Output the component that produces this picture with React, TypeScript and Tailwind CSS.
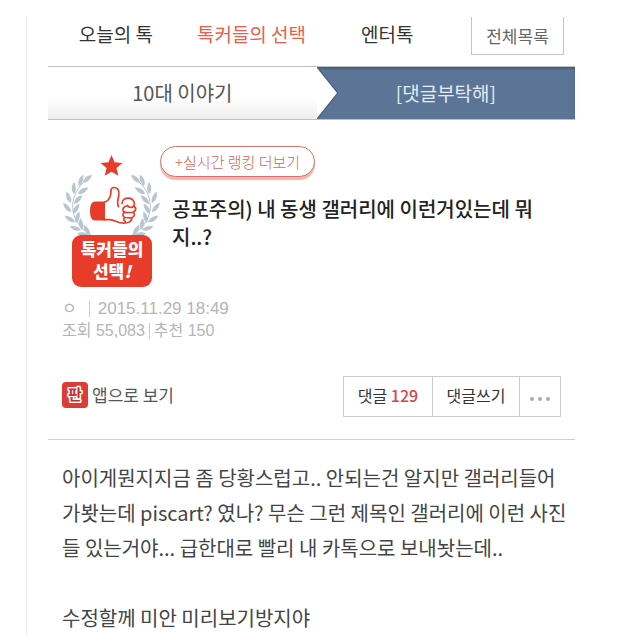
const tabs = [
  { name: "오늘의 톡", active: false },
  { name: "톡커들의 선택", active: true },
  { name: "엔터톡", active: false },
];

// [x, y, angle] of the base of every leaf on the left branch
const leaves = [
  [21, 37, -42],
  [17, 40, -70],
  [16, 48, -32],
  [12, 48, -90],
  [12, 58, -46],
  [9, 57, -112],
  [11, 68, -58],
  [9, 66, -130],
  [14, 77, -74],
  [13, 76, -148],
  [20, 84, -98],
  [19, 84, -162],
  [28, 89, -122],
  [27, 89, -172],
];

function Branch() {
  return (
    <g fill="#b9c5d0">
      <path
        d="M22 36C13 44 8 57 12 69c3 9 9 15 17 20"
        fill="none"
        stroke="#b9c5d0"
        strokeWidth="1"
      />
      {leaves.map(([x, y, angle]) => (
        <path
          key={`${x}-${y}-${angle}`}
          d="M0 0C3-3 8-3 12 0C8 2.500 3 2.500 0 0Z"
          transform={`translate(${x} ${y}) rotate(${angle})`}
        />
      ))}
    </g>
  );
}

function Badge() {
  return (
    <svg
      viewBox="0 0 98 142"
      className="w-[98px] h-[142px] shrink-0"
      role="img"
      aria-label="톡커들의 선택!"
    >
      <path
        d="M49.5 9l3 7.3 8 .6-6 5.2 1.8 7.7-6.8-4.1-6.8 4.1 1.9-7.7-6.1-5.2 8-.6z"
        fill="#e83c2b"
      />
      <Branch />
      <g transform="translate(99 0) scale(-1 1)">
        <Branch />
      </g>

      {/* thumbs up */}
      <path
        d="M43 55.500H33c-3.500 0-5 4-5 9.500s1.500 9.500 5 9.500h10z"
        fill="#e83c2b"
      />
      <g
        fill="none"
        stroke="#e83c2b"
        strokeWidth="1.700"
        strokeLinecap="round"
        strokeLinejoin="round"
      >
        <path d="M42 56.500C46 55 48.500 51.500 48.800 47.500C49 44 48.800 41.500 52 41.500C56.500 41.500 57.500 46 56.800 49.500C56 53.500 54.500 56.500 56.500 60.500" />
        <path d="M60 57.500C60 53.500 64 51.500 67.500 52.200C72 53 73.500 57.500 71.500 60.300C70 62.300 66.500 61.500 65.500 59.500" />
        <path d="M65 60C62.500 60 60.500 62 61 64.500C61.500 66 63 66.500 65 66.500L70.500 66.300C74.500 65.500 74.500 61.500 71.800 60.300" />
        <path d="M62.500 66.500C60 67.500 60.500 71 63 71.500L69.500 71.800C73 71 73 67.500 71 66.300" />
        <path d="M62.500 71.800C61 73 62 75 63.500 75.500M69.700 71.800C70 75.500 66.500 77.200 61.500 77.200C55 77.200 53 73.600 47.500 73.600H42" />
      </g>

      <rect x="10" y="89" width="80" height="52" rx="9" fill="#e83c2b" />
      <g fill="#fff" fontWeight="900" fontSize="17" textAnchor="middle">
        <text x="50" y="110">
          톡커들의
        </text>
        <text x="50" y="132">
          선택<tspan fontStyle="italic">!</tspan>
        </text>
      </g>
    </svg>
  );
}

function AppIcon() {
  return (
    <svg viewBox="0 0 26 26" className="size-[26px]" aria-hidden="true">
      <rect width="26" height="26" rx="4" fill="#dc3c37" />
      <text
        x="13"
        y="18"
        textAnchor="middle"
        fontSize="15"
        fontWeight="700"
        fill="#c8302c"
        stroke="#fff"
        strokeWidth="3"
        strokeLinejoin="round"
        paintOrder="stroke"
      >
        판
      </text>
    </svg>
  );
}

export default function App() {
  return (
    <div className="min-h-screen overflow-hidden bg-white pt-[17px] font-['Noto_Sans_CJK_KR',sans-serif]">
      <div className="ml-[26px] border-l border-[#ededed] pl-[21px] pr-[65px] pb-1">
        {/* Top menu */}
        <nav className="flex h-[49px] items-start">
          <div className="grid flex-1 grid-cols-3 text-center text-[19px] leading-[34px]">
            {tabs.map((tab) => (
              <a
                key={tab.name}
                href="#"
                className={tab.active ? "text-[#e8604f]" : "text-[#333]"}
              >
                {tab.name}
              </a>
            ))}
          </div>
          <button className="ml-4 mr-[11px] h-[38px] w-[93px] border border-t-0 border-[#c4c4c4] text-[17px] text-[#666]">
            전체목록
          </button>
        </nav>

        {/* Category bar */}
        <div className="flex h-[54px] border-y border-[#bcbfc4] text-center text-[20px] leading-[52px]">
          <a
            href="#"
            className="w-[51%] bg-linear-to-b from-white from-60% to-[#ededed] text-[#555]"
          >
            10대 이야기
          </a>
          <a
            href="#"
            className="relative flex-1 bg-[#5c7596] text-[19px] text-[#e4ebf5] shadow-[inset_0_2px_2px_#4a5f7c]"
          >
            <svg
              viewBox="0 0 24 52"
              className="absolute left-0 top-0 h-full w-6"
              aria-hidden="true"
            >
              <path d="M0 0h1l20.500 26L1 52H0z" fill="#4a5f7c" />
              <path d="M0 1l20 25L0 51z" fill="#fff" />
            </svg>
            [댓글부탁해]
          </a>
        </div>

        {/* Post header */}
        <header className="border-b border-[#cfcfcf] px-[14px] pt-[26px] pb-[22px]">
          <div className="flex">
            <Badge />
            <div>
              <button className="h-[31px] rounded-full border border-[#d4736a] bg-white px-[14px] text-[15px] leading-[28px] font-light text-[#d9655b] shadow-[0_3px_1px_#f5b5ad]">
                +실시간 랭킹 더보기
              </button>
              <h1 className="mt-[18px] pl-3 text-[20px] leading-[28px] font-medium text-[#222]">
                공포주의) 내 동생 갤러리에 이런거있는데 뭐
                <br />
                지..?
              </h1>
            </div>
          </div>

          <div className="mt-[10px] font-['Liberation_Sans','Noto_Sans_CJK_KR',sans-serif] text-[16px] leading-[22px] text-[#b5b5b5]">
            <p className="flex items-center">
              <span>ㅇ</span>
              <span className="ml-3 mr-2 h-4 w-px bg-[#ccc]" />
              <time className="text-[17px]">2015.11.29 18:49</time>
            </p>
            <p className="flex items-center">
              <span>조회 55,083</span>
              <span className="mx-1 h-4 w-px bg-[#ccc]" />
              <span>추천 150</span>
            </p>
          </div>

          <div className="mt-[34px] flex items-start justify-between">
            <a
              href="#"
              className="flex items-center gap-1 pt-[6px] text-[17px] leading-[26px] text-[#555]"
            >
              <AppIcon />
              앱으로 보기
            </a>
            <div className="flex h-[41px] divide-x divide-[#ccc] border border-[#ccc] text-[16px] text-[#333]">
              <button className="w-[89px] pb-1">
                댓글 <span className="font-medium text-[#d9404a]">129</span>
              </button>
              <button className="w-[87px] pb-1">댓글쓰기</button>
              <button
                className="flex w-10 items-center justify-center gap-1 pt-1"
                aria-label="더보기"
              >
                <span className="size-1 rounded-full bg-[#aaa]" />
                <span className="size-1 rounded-full bg-[#aaa]" />
                <span className="size-1 rounded-full bg-[#aaa]" />
              </button>
            </div>
          </div>
        </header>

        {/* Post body */}
        <article className="px-[14px] pt-[20px] text-[20px] leading-[35px] whitespace-nowrap text-[#444]">
          <p>
            아이게뭔지지금 좀 당황스럽고.. 안되는건 알지만 갤러리들어
            <br />
            가봣는데 piscart? 였나? 무슨 그런 제목인 갤러리에 이런 사진
            <br />
            들 있는거야... 급한대로 빨리 내 카톡으로 보내놧는데..
          </p>
          <p className="mt-[35px]">수정할께 미안 미리보기방지야</p>
        </article>
      </div>
    </div>
  );
}
